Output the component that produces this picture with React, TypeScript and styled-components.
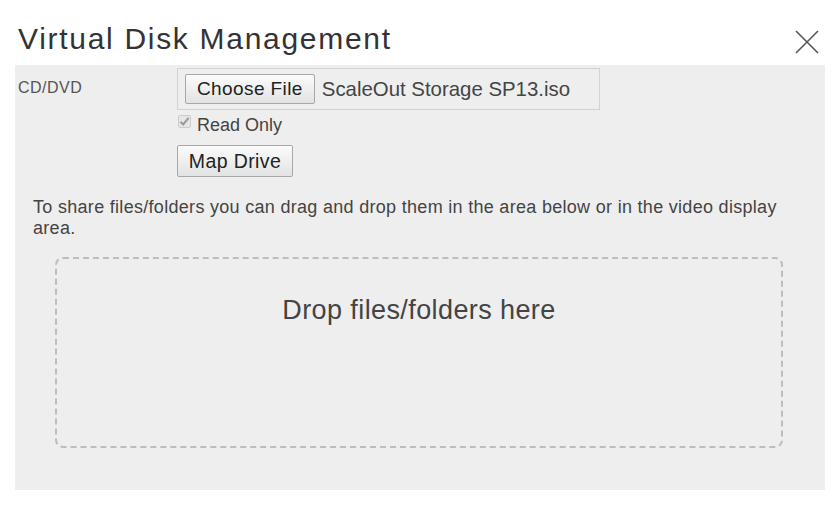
import React from 'react'
import styled, {createGlobalStyle} from 'styled-components'

const Global = createGlobalStyle`
    body{
        margin: 0;
        background-color: #ffffff;
        font-family: "Liberation Sans", Arial, sans-serif;
    }
`

const App = () => {
  return (
    <Container>
        <Global />
        <Header>
            <Title>Virtual Disk Management</Title>
            <Close aria-label="Close">
                <svg width="24" height="24" viewBox="0 0 24 24">
                    <path d="M1 1 L23 23 M23 1 L1 23" stroke="#555" strokeWidth="1.6" fill="none" />
                </svg>
            </Close>
        </Header>

        <Panel>
            <Row>
                <Label>CD/DVD</Label>
                <Controls>
                    <FileBox>
                        <Button>Choose File</Button>
                        <FileName>ScaleOut Storage SP13.iso</FileName>
                    </FileBox>
                    <CheckRow>
                        <Check>
                            <svg width="11" height="11" viewBox="0 0 11 11">
                                <path d="M1.5 5.8 L4.2 8.5 L9.6 1.8" stroke="#9a9a9a" strokeWidth="2" fill="none" />
                            </svg>
                        </Check>
                        Read Only
                    </CheckRow>
                    <MapButton>Map Drive</MapButton>
                </Controls>
            </Row>

            <Info>
                To share files/folders you can drag and drop them in the area below or in the video display area.
            </Info>

            <Drop>Drop files/folders here</Drop>
        </Panel>
    </Container>
  )
}

export default App

const Container = styled.div`
    width: 840px;
    height: 508px;
    display: flex;
    flex-direction: column;
`

const Header = styled.div`
    height: 65px;
    box-sizing: border-box;
    padding: 24px 21px 0 18px;
    display: flex;
    justify-content: space-between;
    align-items: flex-start;
`

const Title = styled.h1`
    margin: 0;
    font-size: 30px;
    line-height: 30px;
    font-weight: 400;
    letter-spacing: 1.7px;
    color: #333333;
`

const Close = styled.div`
    width: 24px;
    height: 24px;
    margin-top: 6px;
    cursor: pointer;
`

const Panel = styled.div`
    width: 810px;
    height: 425px;
    margin-left: 15px;
    box-sizing: border-box;
    padding: 3px 18px 0 3px;
    background-color: #eeeeee;
    display: flex;
    flex-direction: column;
`

const Row = styled.div`
    display: flex;
`

const Label = styled.div`
    width: 159px;
    padding-top: 11px;
    font-size: 16px;
    line-height: 18px;
    letter-spacing: 0.5px;
    color: #555555;
`

const Controls = styled.div`
    display: flex;
    flex-direction: column;
    align-items: flex-start;
`

const FileBox = styled.div`
    width: 423px;
    height: 42px;
    box-sizing: border-box;
    border: 1px solid #d2d2d2;
    padding: 0 7px;
    display: flex;
    align-items: center;
    gap: 7px;
`

const Button = styled.div`
    height: 30px;
    box-sizing: border-box;
    padding: 0 11px;
    display: flex;
    align-items: center;
    justify-content: center;
    white-space: nowrap;
    border: 1px solid #a8a8a8;
    border-radius: 2px;
    background: linear-gradient(#fbfbfb, #e3e3e3);
    font-size: 19px;
    letter-spacing: 0.4px;
    color: #222222;
    cursor: pointer;
`

const MapButton = styled(Button)`
    height: 32px;
    width: 116px;
    padding: 0;
    margin-top: 8px;
    font-size: 19.5px;
`

const FileName = styled.span`
    font-size: 20.4px;
    color: #444444;
    white-space: nowrap;
`

const CheckRow = styled.div`
    margin-top: 3px;
    height: 24px;
    display: flex;
    align-items: flex-start;
    font-size: 18px;
    line-height: 24px;
    color: #444444;
`

const Check = styled.span`
    width: 13px;
    height: 13px;
    margin: 2px 6px 0 1px;
    box-sizing: border-box;
    border: 1px solid #cccccc;
    border-radius: 2px;
    background-color: #e6e6e6;
    display: flex;
    align-items: center;
    justify-content: center;
`

const Info = styled.p`
    margin: 20px 0 0 15px;
    font-size: 18px;
    line-height: 21px;
    letter-spacing: 0.3px;
    color: #444444;
`

const Drop = styled.div`
    width: 728px;
    height: 191px;
    margin: 18px 0 0 37px;
    box-sizing: border-box;
    border: 2px dashed #bdbdbd;
    border-radius: 8px;
    padding-top: 35px;
    text-align: center;
    font-size: 27px;
    line-height: 32px;
    letter-spacing: 0.4px;
    color: #444444;
`
